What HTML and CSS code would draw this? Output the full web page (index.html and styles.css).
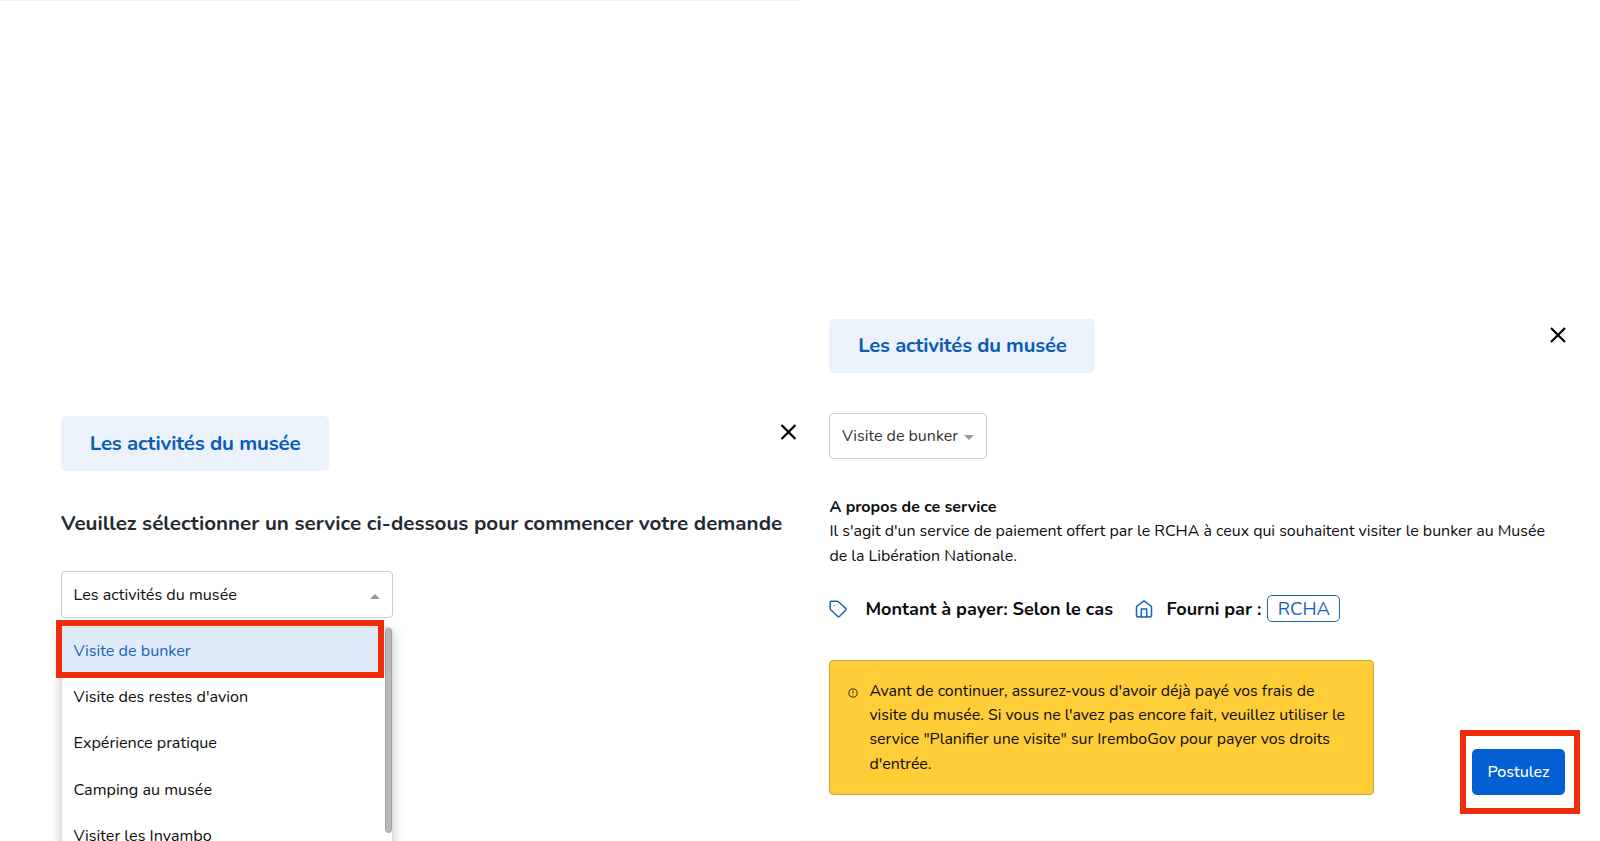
FILE: index.html
```
<!DOCTYPE html>
<html lang="fr">

<head>
  <meta charset="UTF-8">
  <meta name="viewport" content="width=device-width, initial-scale=1.0">
  <title>Les activités du musée</title>
  <link rel="stylesheet" href="styles.css">
</head>

<body>
  <div class="page">
    <!-- choix du service -->
    <section class="pane pane-left">
      <div class="pane-head">
        <h1 class="chip">Les activités du musée</h1>
        <svg class="close" viewBox="0 0 16 18"><path d="M1.5 2l14 14M15.5 2l-14 14" /></svg>
      </div>
      <h2 class="title">Veuillez sélectionner un service ci-dessous pour commencer votre demande</h2>
      <div class="select">
        <span>Les activités du musée</span>
        <i class="arrow arrow-up"></i>
      </div>
      <div class="menu">
        <div class="option active">Visite de bunker</div>
        <div class="option">Visite des restes d'avion</div>
        <div class="option">Expérience pratique</div>
        <div class="option">Camping au musée</div>
        <div class="option">Visiter les Inyambo</div>
        <div class="scrollbar"></div>
        <div class="mark mark-option"></div>
      </div>
    </section>

    <!-- détail du service -->
    <section class="pane pane-right">
      <div class="pane-head">
        <h1 class="chip">Les activités du musée</h1>
        <svg class="close" viewBox="0 0 18 18"><path d="M2 2l14 14M16 2l-14 14" /></svg>
      </div>
      <div class="select">
        <span>Visite de bunker</span>
        <i class="arrow arrow-down"></i>
      </div>
      <div class="about">
        <h3>A propos de ce service</h3>
        <p>Il s'agit d'un service de paiement offert par le RCHA à ceux qui souhaitent visiter le bunker au Musée<br>de la Libération Nationale.</p>
      </div>
      <div class="infos">
        <svg class="icon" viewBox="0 0 18 18"><path d="M1.2 2.2c0-.6.4-1 1-1h6c.5 0 .9.2 1.200.5l7.200 6.500c.6.6.6 1.400 0 2l-6 6c-.6.6-1.400.6-2 0L1.700 9.800c-.3-.3-.5-.7-.5-1.200z" /><path d="M5.200 5.200v.8" /></svg>
        <b class="price">Montant à payer: Selon le cas</b>
        <svg class="icon" viewBox="0 0 18 18"><path d="M1.5 7.2c0-.5.2-.9.6-1.200L9 .8 15.900 6c.4.3.6.7.6 1.200V15c0 1.100-.8 1.900-1.900 1.900H3.400c-1.100 0-1.900-.8-1.900-1.900z" /><path d="M6.300 16.900V9h5.400v7.900" /></svg>
        <b class="provider">Fourni par :</b>
        <span class="tag">RCHA</span>
      </div>
      <div class="bottom">
        <div class="alert">
          <svg class="icon-info" viewBox="0 0 10 10"><circle cx="5" cy="5" r="4.1" /><path d="M5 2.500v2.900M5 6.800v.7" /></svg>
          <p>Avant de continuer, assurez-vous d'avoir déjà payé vos frais de<br>visite du musée. Si vous ne l'avez pas encore fait, veuillez utiliser le<br>service "Planifier une visite" sur IremboGov pour payer vos droits<br>d'entrée.</p>
        </div>
        <div class="mark mark-button">
          <button class="btn">Postulez</button>
        </div>
      </div>
    </section>
  </div>
</body>

</html>
```
FILE: styles.css
```
* {
  box-sizing: border-box;
}

body {
  margin: 0;
  background: #fff;
  color: #0c0c0c;
  font-family: Nunito, Lato, "Open Sans", sans-serif;
  font-size: 16.15px;
}

h1, h2, h3, p {
  margin: 0;
}

.page {
  display: flex;
  height: 841px;
  overflow: hidden;
}

.pane {
  width: 800px;
  height: 841px;
}

.pane-left {
  padding: 415px 4px 0 61px;
  border-top: 1px solid #f2f2f2;
}

.pane-right {
  padding: 319px 20px 0 29.4px;
  border-bottom: 1px solid #f6f6f6;
}

.pane-head {
  display: flex;
  justify-content: space-between;
}

.chip {
  width: 268px;
  height: 55px;
  border-radius: 5px;
  background: #ebf2fc;
  color: #0a5cb8;
  font-size: 20.5px;
  letter-spacing: -0.18px;
  line-height: 54px;
  text-align: center;
}

.pane-right .chip {
  width: 266px;
  height: 54px;
  font-size: 20.3px;
  line-height: 53px;
}

.close {
  width: 16px;
  height: 18px;
  margin-top: 7px;
  fill: none;
  stroke: #000;
  stroke-width: 2.2;
}

.pane-right .close {
  width: 18px;
  margin: 7px 13px 0 0;
}

.title {
  margin-top: 37px;
  color: #242a33;
  font-size: 20.6px;
  line-height: 30px;
  white-space: nowrap;
}

.select {
  display: flex;
  align-items: center;
  justify-content: space-between;
  width: 332px;
  height: 47px;
  margin-top: 33px;
  padding: 0 12px 0 11.5px;
  border: 1px solid #ccc;
  border-radius: 4px;
}

.pane-right .select {
  width: 158px;
  height: 46px;
  margin-top: 40px;
  padding-bottom: 1px;
  color: #333;
  font-size: 16px;
}

.arrow {
  margin-top: 3px;
  border: 5.5px solid transparent;
}

.arrow-up {
  border-top: 0;
  border-bottom-color: #999;
}

.arrow-down {
  border-bottom: 0;
  border-top-color: #999;
}

.menu {
  position: relative;
  width: 332px;
  height: 240px;
  margin-top: 9px;
  border: 1px solid #ddd;
  border-radius: 4px;
  box-shadow: 0 4px 12px rgba(0, 0, 0, .22);
}

.option {
  height: 46.2px;
  padding-left: 11.5px;
  line-height: 46px;
}

.option.active {
  background: #dfebf8;
  color: #1563bb;
}

.scrollbar {
  position: absolute;
  top: 0;
  right: 0;
  width: 7px;
  height: 205px;
  border: 1px solid #a0a0a0;
  border-radius: 4px;
  background: #b8b8b8;
}

.mark {
  border: 6px solid #f22c0a;
}

.mark-option {
  position: absolute;
  top: -8px;
  left: -6px;
  width: 328px;
  height: 58px;
}

.about {
  margin-top: 36px;
  font-size: 15.95px;
  line-height: 24.4px;
}

.about h3 {
  font-size: 16px;
}

.infos {
  display: flex;
  align-items: center;
  height: 28px;
  margin-top: 26.4px;
  font-size: 18.08px;
}

.icon {
  width: 18px;
  height: 18px;
  fill: none;
  stroke: #1a62b5;
  stroke-width: 1.5;
}

.price {
  width: 270px;
  margin-left: 18px;
}

.provider {
  width: 101px;
  margin-left: 13px;
}

.tag {
  width: 73px;
  height: 27px;
  border: 1px solid #1a62b5;
  border-radius: 5px;
  color: #1a62b5;
  font-size: 18.5px;
  line-height: 26px;
  text-align: center;
}

.bottom {
  display: flex;
  justify-content: space-between;
  margin-top: 37px;
}

.alert {
  display: flex;
  width: 545px;
  height: 135px;
  padding: 18px;
  border: 1px solid #d0a53a;
  border-radius: 4px;
  background: #fecd38;
  font-size: 15.93px;
  line-height: 24.4px;
  white-space: nowrap;
}

.icon-info {
  width: 10px;
  height: 10px;
  margin: 9px 11px 0 0;
  fill: none;
  stroke: #3a3010;
}

.mark-button {
  width: 120px;
  height: 84px;
  margin-top: 70px;
  padding: 13px 6px;
}

.btn {
  width: 93px;
  height: 46px;
  padding: 0;
  border: 0;
  border-radius: 5px;
  background: #0360d3;
  color: #fff;
  font-family: inherit;
  font-size: 16.1px;
  font-weight: 500;
}
```
